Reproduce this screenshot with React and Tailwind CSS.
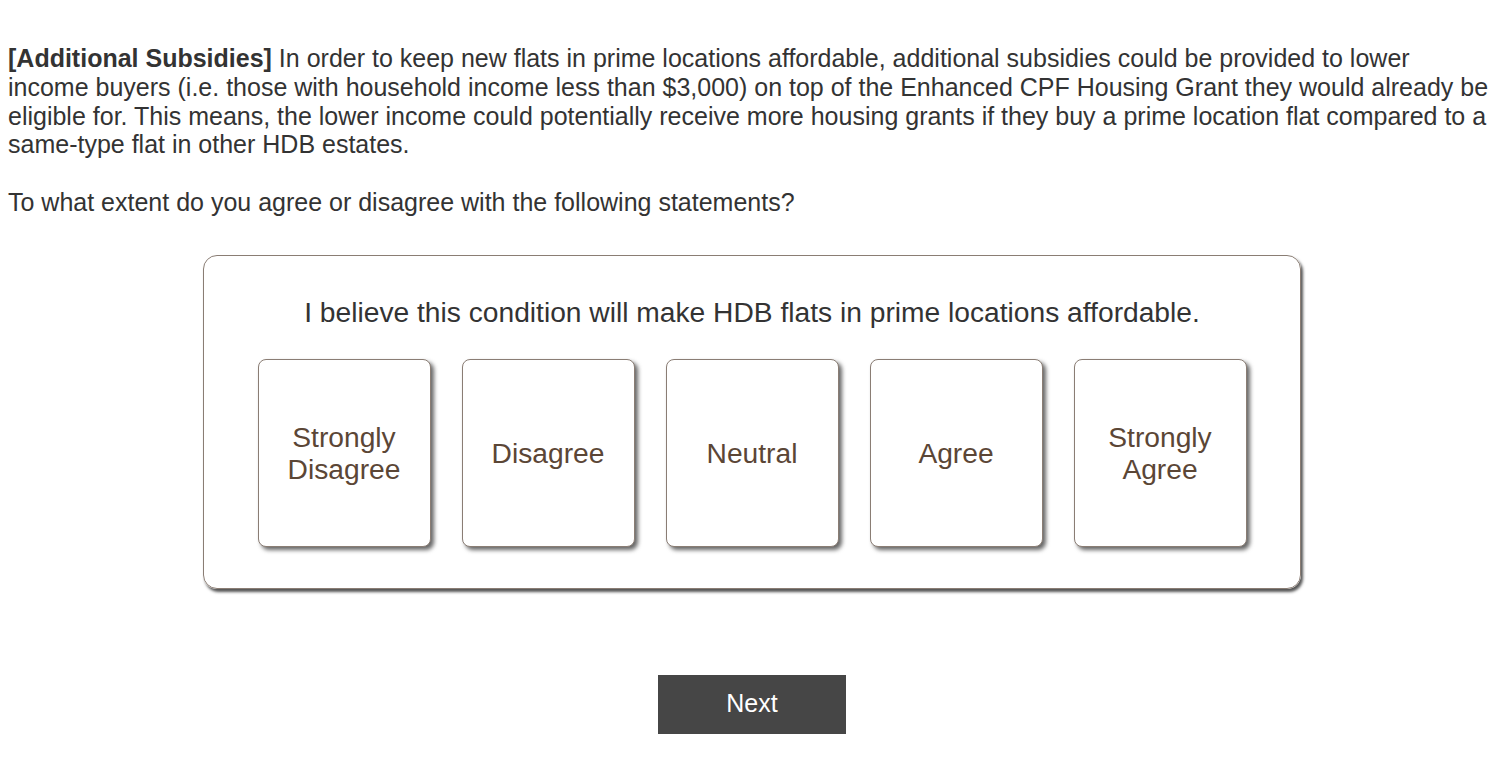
import React, { useState } from "react";

const choices = [
    ["Strongly", "Disagree"],
    ["Disagree"],
    ["Neutral"],
    ["Agree"],
    ["Strongly", "Agree"],
];

export default function App() {
    const [picked, setPicked] = useState(null);

    return (
        <div className="min-h-screen bg-white text-[#333333]" style={{ fontFamily: '"Liberation Sans", Arial, sans-serif' }}>
            <div className="px-2 pt-[44px]">
                <p className="text-[25px] leading-[28.75px]">
                    <b>[Additional Subsidies]</b> In order to keep new flats in prime locations affordable, additional subsidies could be provided to lower income buyers (i.e. those with household income less than $3,000) on top of the Enhanced CPF Housing Grant they would already be eligible for. This means, the lower income could potentially receive more housing grants if they buy a prime location flat compared to a same-type flat in other HDB estates.
                </p>
                <p className="text-[25px] leading-[28.75px] mt-[28.75px]">
                    To what extent do you agree or disagree with the following statements?
                </p>
            </div>

            <div className="flex justify-center mt-[38px]">
                <div className="w-[1098px] border border-[#8a7d74] rounded-[14px] shadow-[2px_3px_3px_#555] pt-[39px] pb-[41px]">
                    <div className="text-center text-[28.2px] leading-[34px] text-[#333]">
                        I believe this condition will make HDB flats in prime locations affordable.
                    </div>
                    <div className="flex justify-center gap-[31px] mt-[30px]">
                        {choices.map((lines, i) => (
                            <button
                                key={i}
                                onClick={() => setPicked(i)}
                                className={`w-[173px] h-[188px] border border-[#8a7d74] rounded-[8px] shadow-[3px_3px_4px_#666] flex flex-col items-center justify-center text-[28.2px] leading-[32px] text-[#5b4636] ${picked === i ? "bg-[#f3ede8]" : "bg-white"}`}
                            >
                                {lines.map((l) => (
                                    <span key={l}>{l}</span>
                                ))}
                            </button>
                        ))}
                    </div>
                </div>
            </div>

            <div className="flex justify-center mt-[86px]">
                <button className="w-[188px] h-[59px] bg-[#464646] text-white text-[25px]">Next</button>
            </div>
        </div>
    );
}
